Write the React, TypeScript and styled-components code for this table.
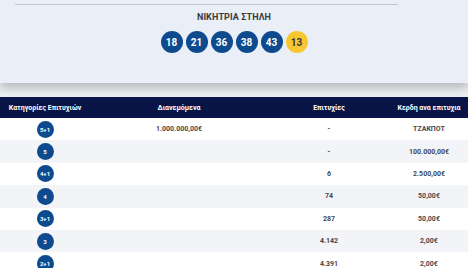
import React, { FC } from "react";
import styled, { createGlobalStyle } from "styled-components";

const GlobalStyle = createGlobalStyle`
html, body {
    margin: 0;
    padding: 0;
    background: #f4f5f8;
    font-family: Roboto, "Noto Sans", sans-serif;
    overflow: hidden;
}
`;

const Page = styled.div`
width: 468px;
height: 268px;
display: flex;
flex-direction: column;
`;

const DrawPanel = styled.section`
box-sizing: border-box;
height: 83px;
flex-shrink: 0;
background: #eaeef6;
padding: 4px 0 0;
display: flex;
flex-direction: column;
align-items: center;
box-shadow: 0 5px 9px rgba(0, 0, 0, 0.22);
position: relative;
z-index: 1;
`;

const Rule = styled.hr`
align-self: flex-start;
margin: 0 0 0 15px;
width: 383px;
border: none;
border-top: 1px solid #c4c6cf;
`;

const Title = styled.div`
margin-top: 7px;
font-size: 9px;
font-weight: 700;
color: #3a3a3f;
letter-spacing: 0.1px;
`;

const BallRow = styled.div`
margin-top: 9px;
display: flex;
gap: 3px;
`;

const Ball = styled.div<{ $bonus?: boolean }>`
width: 22px;
height: 22px;
border-radius: 50%;
display: flex;
align-items: center;
justify-content: center;
font-size: 10px;
font-weight: 700;
background: ${({ $bonus }) => ($bonus ? "#f8c630" : "#0e4a8e")};
color: ${({ $bonus }) => ($bonus ? "#3a3a3a" : "#ffffff")};
`;

const Gap = styled.div`
height: 14px;
flex-shrink: 0;
background: #eceef2;
`;

const Table = styled.div`
display: flex;
flex-direction: column;
flex-shrink: 0;
`;

const Row = styled.div<{ $shade?: boolean; $head?: boolean }>`
display: grid;
grid-template-columns: 90px 178px 122px 78px;
height: ${({ $head }) => ($head ? "21px" : "22.4px")};
flex-shrink: 0;
align-items: center;
background: ${({ $head, $shade }) => ($head ? "#0a1547" : $shade ? "#f3f4f7" : "#ffffff")};
color: ${({ $head }) => ($head ? "#ffffff" : "#47474c")};
font-size: 7px;
font-weight: 700;
`;

const Cell = styled.div`
text-align: center;
display: flex;
justify-content: center;
`;

const CatBall = styled.div`
width: 17px;
height: 17px;
border-radius: 50%;
background: #0e4a8e;
color: #ffffff;
font-size: 6px;
font-weight: 700;
display: flex;
align-items: center;
justify-content: center;
`;

const numbers = [18, 21, 36, 38, 43];

const rows = [
    { cat: "5+1", dist: "1.000.000,00€", wins: "-", prize: "ΤΖΑΚΠΟΤ" },
    { cat: "5", dist: "", wins: "-", prize: "100.000,00€" },
    { cat: "4+1", dist: "", wins: "6", prize: "2.500,00€" },
    { cat: "4", dist: "", wins: "74", prize: "50,00€" },
    { cat: "3+1", dist: "", wins: "287", prize: "50,00€" },
    { cat: "3", dist: "", wins: "4.142", prize: "2,00€" },
    { cat: "2+1", dist: "", wins: "4.391", prize: "2,00€" },
];

const App: FC = () => (
    <Page>
        <GlobalStyle />
        <DrawPanel>
            <Rule />
            <Title>ΝΙΚΗΤΡΙΑ ΣΤΗΛΗ</Title>
            <BallRow>
                {numbers.map((n) => (
                    <Ball key={n}>{n}</Ball>
                ))}
                <Ball $bonus>13</Ball>
            </BallRow>
        </DrawPanel>
        <Gap />
        <Table>
            <Row $head>
                <Cell>Κατηγορίες Επιτυχιών</Cell>
                <Cell>Διανεμόμενα</Cell>
                <Cell>Επιτυχίες</Cell>
                <Cell>Κερδη ανα επιτυχια</Cell>
            </Row>
            {rows.map((r, i) => (
                <Row key={r.cat} $shade={i % 2 === 1}>
                    <Cell>
                        <CatBall>{r.cat}</CatBall>
                    </Cell>
                    <Cell>{r.dist}</Cell>
                    <Cell>{r.wins}</Cell>
                    <Cell>{r.prize}</Cell>
                </Row>
            ))}
        </Table>
    </Page>
);

export default App;
